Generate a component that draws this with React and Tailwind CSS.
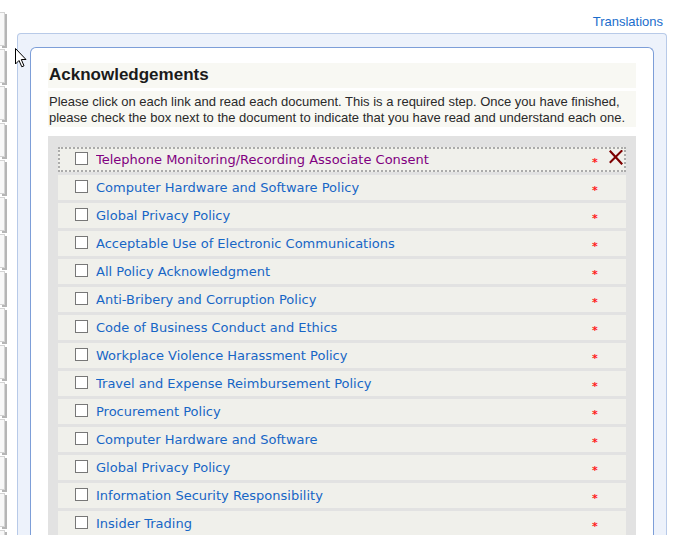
import React from 'react';

const docs = [
  'Telephone Monitoring/Recording Associate Consent',
  'Computer Hardware and Software Policy',
  'Global Privacy Policy',
  'Acceptable Use of Electronic Communications',
  'All Policy Acknowledgment',
  'Anti-Bribery and Corruption Policy',
  'Code of Business Conduct and Ethics',
  'Workplace Violence Harassment Policy',
  'Travel and Expense Reimbursement Policy',
  'Procurement Policy',
  'Computer Hardware and Software',
  'Global Privacy Policy',
  'Information Security Responsibility',
  'Insider Trading',
];

const SideTab = () => (
  <div className="h-[34px] w-[5px] shrink-0 bg-[#f8f8f8] border border-l-0 border-[#d4d4d4] shadow-[2px_2px_0_#b5b5b5]" />
);

const RemoveIcon = () => (
  <svg width="14" height="15" viewBox="0 0 14 15" className="block">
    <path d="M1.5 1.5 L12.5 13.5" stroke="#7d0000" strokeWidth="2.2" strokeLinecap="square" fill="none" />
    <path d="M12.5 1 L1.5 12" stroke="#7d0000" strokeWidth="2" strokeLinecap="square" fill="none" />
  </svg>
);

const Cursor = () => (
  <svg width="13" height="20" viewBox="0 0 13 20" className="absolute left-[15px] top-[48px]">
    <path d="M0.5 0.5 L0.5 16 L4 12.5 L6.8 18.8 L9 17.8 L6.3 11.5 L11 11.5 Z" fill="#fff" stroke="#000" strokeWidth="1" strokeLinejoin="miter" />
  </svg>
);

const DocRow = ({ title, first }) => (
  <div
    className={
      'relative flex h-[25px] shrink-0 items-start bg-[#f0f0eb] border-2 ' +
      (first ? 'border-dotted border-[#ababab]' : 'border-transparent')
    }
  >
    <span className="mt-[3px] ml-[15px] h-[13px] w-[13px] shrink-0 border border-[#777] bg-white" />
    <span
      className={
        'ml-[8px] flex-1 truncate text-[13px] leading-[16px] pt-[3px] ' +
        (first ? 'text-[#800080]' : 'text-[#1766c6]')
      }
    >
      {title}
    </span>
    <span className="mt-[8px] w-[7px] text-[11px] leading-[11px] font-bold text-[#ff1a1a]">*</span>
    <span className="ml-[10px] mr-[1px] w-[14px] mt-[1px]">{first ? <RemoveIcon /> : null}</span>
  </div>
);

export default function App() {
  return (
    <div className="relative flex h-[535px] w-[673px] overflow-hidden bg-white font-['Liberation_Sans',Arial,sans-serif]">
      <div className="flex w-[7px] shrink-0 flex-col gap-[3px] pt-[12px]">
        {Array.from({ length: 15 }).map((_, i) => (
          <SideTab key={i} />
        ))}
      </div>

      <div className="ml-[10px] mr-[6px] flex min-h-0 flex-1 flex-col">
        <div className="h-[33px] shrink-0 pt-[14px] text-right text-[13px] leading-[16px] text-[#1a6dcc] pr-[4px]">
          Translations
        </div>

        <div className="min-h-0 flex-1 overflow-hidden rounded-t-[4px] border border-b-0 border-[#b8cae8] bg-[#edf2fb] px-[12px] pt-[13px]">
          <div className="h-full overflow-hidden rounded-t-[6px] border border-b-0 border-[#7d9ed8] bg-white px-[17px] pt-[15px]">
            <div className="h-[25px] bg-[#f8f8f3] pl-[1px] pt-[2px] text-[17px] font-bold leading-[20px] text-[#1b1b1b]">
              Acknowledgements
            </div>
            <p className="mt-[3px] bg-[#f8f8f3] px-[1px] pt-[3px] pb-[1px] text-[13px] leading-[16px] text-[#2a2a2a]">
              Please click on each link and read each document. This is a required step. Once you have finished,
              please check the box next to the document to indicate that you have read and understand each one.
            </p>

            <div className="mt-[9px] flex flex-col gap-[3px] bg-[#e2e2e2] px-[10px] pt-[11px] pb-[10px] font-['DejaVu_Sans',Verdana,sans-serif]">
              {docs.map((d, i) => (
                <DocRow key={i} title={d} first={i === 0} />
              ))}
            </div>
          </div>
        </div>
      </div>

      <Cursor />
    </div>
  );
}
